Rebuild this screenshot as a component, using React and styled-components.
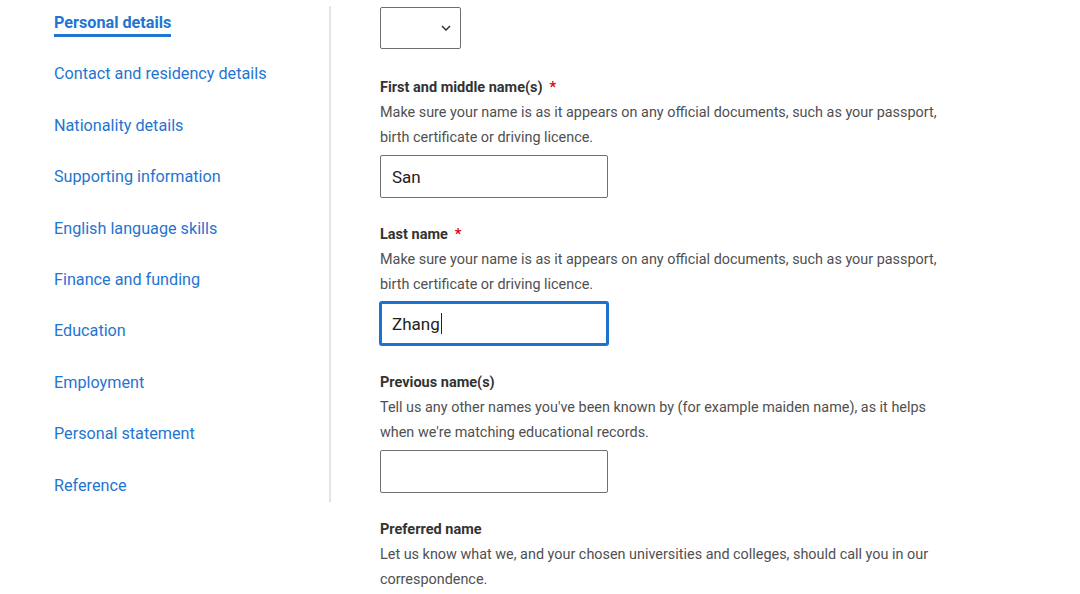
import React from "react";
import styled, { createGlobalStyle } from "styled-components";

const GlobalStyle = createGlobalStyle`
  body {
    margin: 0;
    background: #fff;
    font-family: Roboto, "Liberation Sans", Arial, sans-serif;
    color: #333;
  }
`;

const Page = styled.div`
  display: flex;
  align-items: flex-start;
  width: 1080px;
  height: 594px;
  overflow: hidden;
`;

const Sidebar = styled.nav`
  box-sizing: border-box;
  width: 331px;
  height: 496px;
  margin-top: 6px;
  padding: 5px 0 0 54px;
  border-right: 2px solid #e4e4e4;
  display: flex;
  flex-direction: column;
  align-items: flex-start;
  gap: 27.4px;
`;

const NavLink = styled.a`
  display: inline-block;
  font-size: 16.2px;
  line-height: 23px;
  color: #1f75d2;
  text-decoration: none;
  font-weight: ${(p) => (p.active ? 700 : 400)};
  border-bottom: ${(p) => (p.active ? "3px solid #1f75d2" : "none")};
  margin-bottom: ${(p) => (p.active ? "-2px" : "1px")};
  cursor: pointer;
`;

const Main = styled.main`
  margin-left: 49px;
  padding-top: 7px;
  width: 575px;
`;

const Select = styled.div`
  box-sizing: border-box;
  width: 81px;
  height: 42px;
  border: 1px solid #6f6f6f;
  border-radius: 2px;
  display: flex;
  align-items: center;
  justify-content: flex-end;
  padding-right: 9px;
  margin-bottom: 26px;
`;

const Field = styled.div`
  margin-bottom: 24.3px;
`;

const Label = styled.div`
  font-size: 14.5px;
  line-height: 25px;
  font-weight: 700;
  color: #333;
`;

const Required = styled.span`
  color: #e3000f;
  margin-left: 7px;
`;

const Hint = styled.p`
  margin: 0;
  font-size: 14.4px;
  line-height: 25px;
  color: #505050;
`;

const TextBox = styled.div`
  box-sizing: border-box;
  width: 228px;
  height: 43px;
  margin-top: 5px;
  padding: 0 11px;
  display: flex;
  align-items: center;
  font-size: 17px;
  color: #222;
  border: 1px solid #6f6f6f;
  border-radius: 2px;
  outline: ${(p) => (p.focused ? "3px solid #1a73cf" : "none")};
  outline-offset: -2px;
`;

const Caret = styled.span`
  display: inline-block;
  width: 1px;
  height: 21px;
  margin-left: 1px;
  background: #222;
`;

const navItems = [
  "Personal details",
  "Contact and residency details",
  "Nationality details",
  "Supporting information",
  "English language skills",
  "Finance and funding",
  "Education",
  "Employment",
  "Personal statement",
  "Reference",
];

const Chevron = () => (
  <svg width="10" height="6" viewBox="0 0 10 6">
    <path d="M1 1l4 4 4-4" fill="none" stroke="#333" strokeWidth="1.5" />
  </svg>
);

const nameHint =
  "Make sure your name is as it appears on any official documents, such as your passport, birth certificate or driving licence.";

const App = () => {
  return (
    <>
      <GlobalStyle />
      <Page>
        <Sidebar>
          {navItems.map((item, i) => (
            <NavLink key={item} active={i === 0}>
              {item}
            </NavLink>
          ))}
        </Sidebar>
        <Main>
          <Select>
            <Chevron />
          </Select>

          <Field>
            <Label>
              First and middle name(s)<Required>*</Required>
            </Label>
            <Hint>{nameHint}</Hint>
            <TextBox>San</TextBox>
          </Field>

          <Field>
            <Label>
              Last name<Required>*</Required>
            </Label>
            <Hint>{nameHint}</Hint>
            <TextBox focused>
              Zhang
              <Caret />
            </TextBox>
          </Field>

          <Field>
            <Label>Previous name(s)</Label>
            <Hint>
              Tell us any other names you've been known by (for example maiden
              name), as it helps when we're matching educational records.
            </Hint>
            <TextBox />
          </Field>

          <Field>
            <Label>Preferred name</Label>
            <Hint>
              Let us know what we, and your chosen universities and colleges,
              should call you in our correspondence.
            </Hint>
          </Field>
        </Main>
      </Page>
    </>
  );
};

export default App;
